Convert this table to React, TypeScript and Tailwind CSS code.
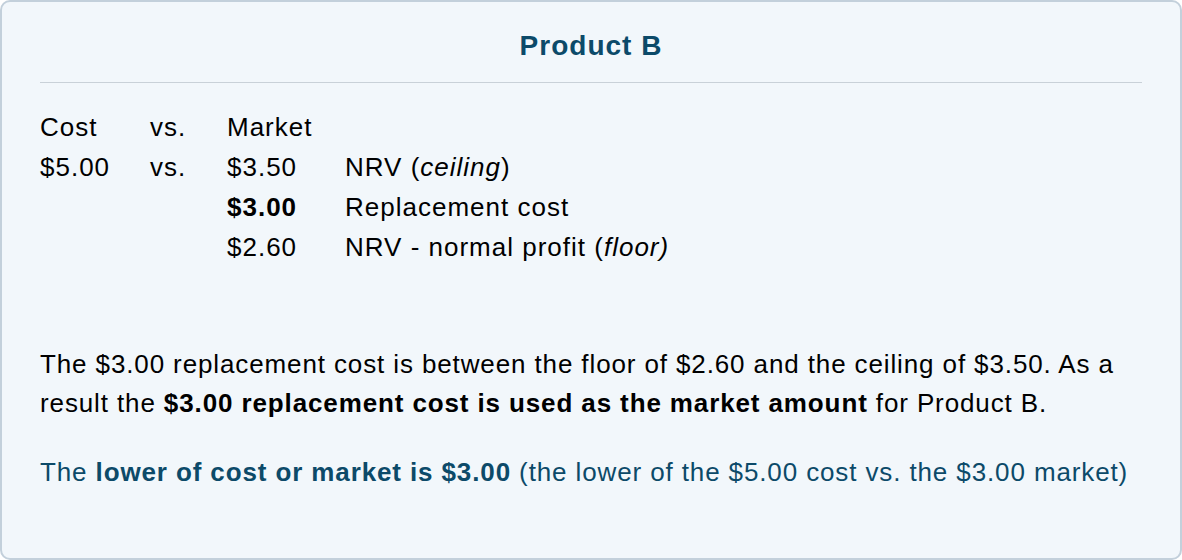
export default function App() {
  return (
    <div className="w-[1182px] h-[560px] bg-white" style={{ fontFamily: '"Liberation Sans", Arial, sans-serif' }}>
      <div className="h-full rounded-[10px] border-2 border-[#c3d0db] bg-[#f2f7fb] px-[38px]">
        <h2 className="pt-[27px] pb-[19px] text-center text-[28px] leading-[34px] font-bold tracking-[1px] text-[#0c4a69] border-b border-[#c9d1d8]">
          Product B
        </h2>

        <div className="mt-[24px] text-[26px] leading-[40px] tracking-[1px] text-black">
          <div className="flex">
            <span className="w-[110px]">Cost</span>
            <span className="w-[77px]">vs.</span>
            <span>Market</span>
          </div>
          <div className="flex">
            <span className="w-[110px]">$5.00</span>
            <span className="w-[77px]">vs.</span>
            <span className="w-[118px]">$3.50</span>
            <span>
              NRV (<i>ceiling</i>)
            </span>
          </div>
          <div className="flex pl-[187px]">
            <span className="w-[118px] font-bold">$3.00</span>
            <span>Replacement cost</span>
          </div>
          <div className="flex pl-[187px]">
            <span className="w-[118px]">$2.60</span>
            <span>
              NRV - normal profit (<i>floor)</i>
            </span>
          </div>
        </div>

        <p className="mt-[78px] text-[26px] leading-[39px] tracking-[0.88px] text-black">
          The $3.00 replacement cost is between the floor of $2.60 and the ceiling of $3.50. As a result the{' '}
          <b>$3.00 replacement cost is used as the market amount</b> for Product B.
        </p>

        <p className="mt-[30px] text-[26px] leading-[39px] tracking-[0.88px] text-[#0c4a69]">
          The <b>lower of cost or market is $3.00</b> (the lower of the $5.00 cost vs. the $3.00 market)
        </p>
      </div>
    </div>
  )
}
